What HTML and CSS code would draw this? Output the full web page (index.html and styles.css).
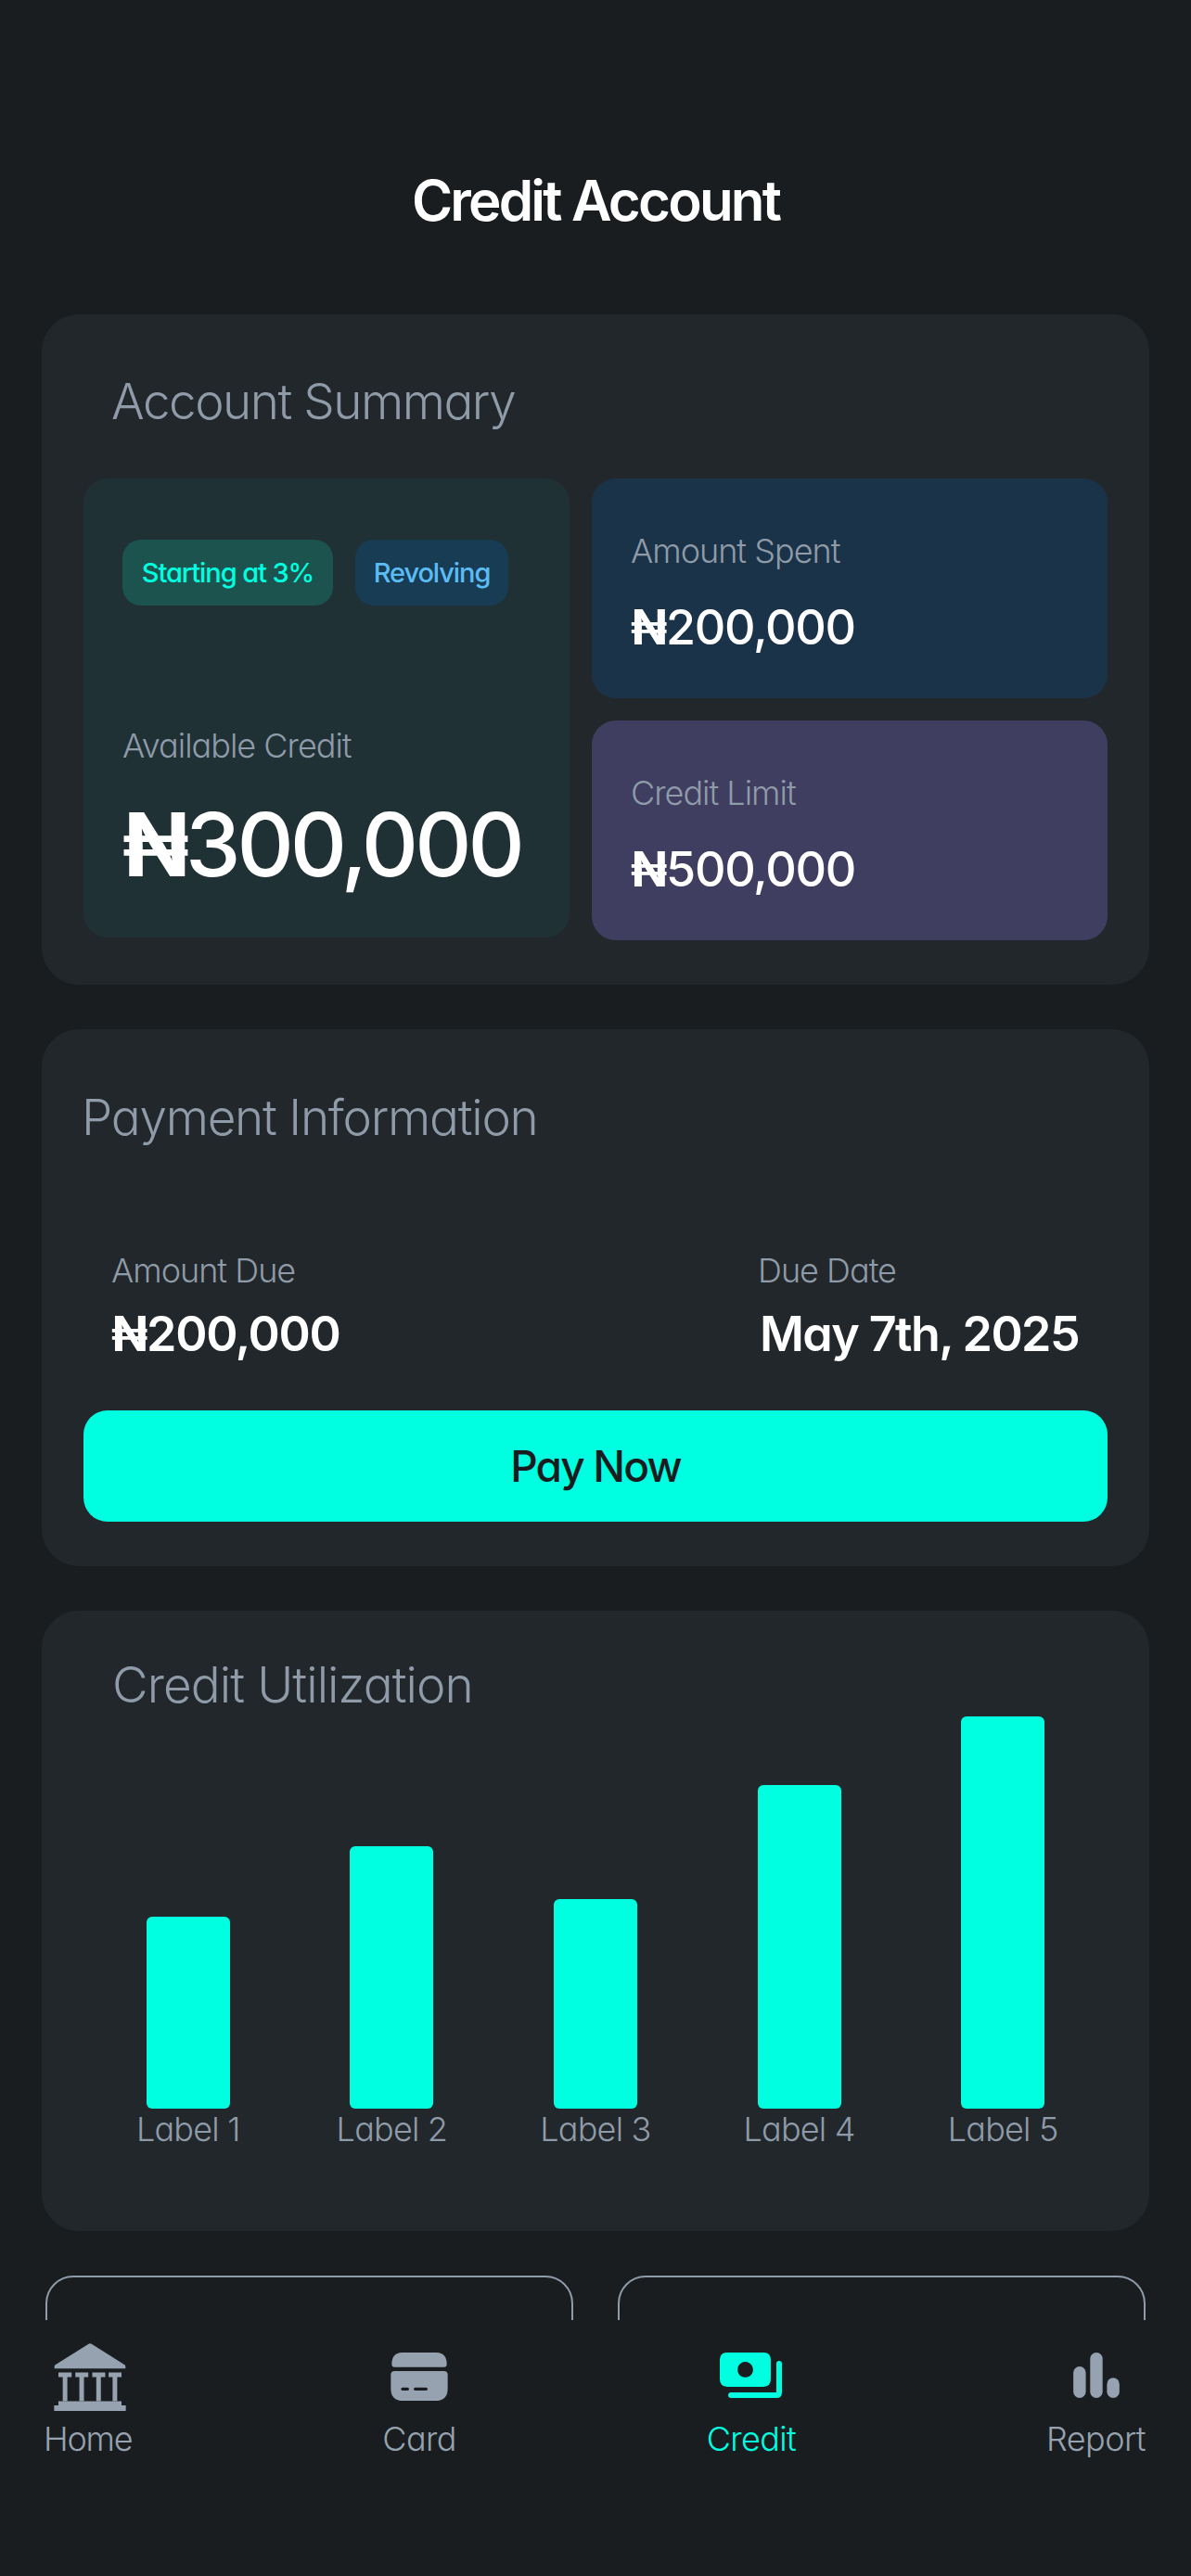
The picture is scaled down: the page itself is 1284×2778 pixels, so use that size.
FILE: index.html
```html
<!DOCTYPE html>
<html lang="en">
<head>
<meta charset="utf-8">
<title>Credit Account</title>
<link rel="stylesheet" href="styles.css">
</head>
<body>
<div class="screen">
  <header class="header"><h1 class="page-title">Credit Account</h1></header>
  <main class="content">
    <section class="card summary">
      <h2 class="card-title summary-title">Account Summary</h2>
      <div class="summary-grid">
        <div class="available">
          <div class="tags">
            <span class="tag tag-green">Starting at 3%</span>
            <span class="tag tag-blue">Revolving</span>
          </div>
          <div class="label available-label">Available Credit</div>
          <div class="hero-value"><span class="naira">₦</span>300,000</div>
        </div>
        <div class="stats">
          <div class="stat stat-blue">
            <div class="label">Amount Spent</div>
            <div class="value stat-value"><span class="naira">₦</span>200,000</div>
          </div>
          <div class="stat stat-purple">
            <div class="label">Credit Limit</div>
            <div class="value stat-value"><span class="naira">₦</span>500,000</div>
          </div>
        </div>
      </div>
    </section>

    <section class="card payment">
      <h2 class="card-title payment-title">Payment Information</h2>
      <div class="pay-row">
        <div class="pay-col">
          <div class="label">Amount Due</div>
          <div class="value pay-value"><span class="naira">₦</span>200,000</div>
        </div>
        <div class="pay-col pay-col-date">
          <div class="label">Due Date</div>
          <div class="value pay-value date-value">May 7th, 2025</div>
        </div>
      </div>
      <button class="pay-button" type="button">Pay Now</button>
    </section>

    <section class="card utilization">
      <h2 class="card-title util-title">Credit Utilization</h2>
      <div class="chart">
        <div class="chart-col"><div class="bar" style="height:207px"></div><div class="chart-label">Label 1</div></div>
        <div class="chart-col"><div class="bar" style="height:283px"></div><div class="chart-label">Label 2</div></div>
        <div class="chart-col"><div class="bar" style="height:226px"></div><div class="chart-label">Label 3</div></div>
        <div class="chart-col"><div class="bar" style="height:349px"></div><div class="chart-label">Label 4</div></div>
        <div class="chart-col"><div class="bar" style="height:423px"></div><div class="chart-label">Label 5</div></div>
      </div>
    </section>

    <div class="outline-row">
      <div class="outline-card"></div>
      <div class="outline-card"></div>
    </div>
  </main>

  <nav class="nav">
    <a class="nav-item">
      <span class="nav-icon">
        <svg class="glyph-home" viewBox="115 80 233 220" fill="currentColor">
          <path d="M226 83 Q232 79 238 83 L344 150 Q347 152 347 156 L347 162 L116 162 L116 156 Q116 152 119 150 Z"/>
          <path d="M129 175H172V190H158V268H143V190H129Z"/>
          <path d="M184 175H226V190H212V268H197V190H184Z"/>
          <path d="M239 175H281V190H267V268H252V190H239Z"/>
          <path d="M292 175H334V190H320V268H305V190H292Z"/>
          <path d="M129 268H334V282H348V300H115V282H129Z"/>
        </svg>
      </span>
      <span class="nav-label nav-label-home">Home</span>
    </a>
    <a class="nav-item">
      <span class="nav-icon">
        <svg class="glyph-card" viewBox="124 112 184 156" fill="currentColor">
          <path d="M162 112H270Q305 112 305 150Q305 159 296 159H136Q127 159 127 150Q127 112 162 112Z"/>
          <path fill-rule="evenodd" d="M136 172H296Q308 172 308 184V228Q308 268 268 268H164Q124 268 124 228V184Q124 172 136 172ZM162 225a5 5 0 0 0 0 10h16a5 5 0 0 0 0-10ZM203 225a5 5 0 0 0 0 10h35a5 5 0 0 0 0-10Z"/>
        </svg>
      </span>
      <span class="nav-label">Card</span>
    </a>
    <a class="nav-item nav-item-active">
      <span class="nav-icon">
        <svg class="glyph-credit" viewBox="1192 112 200 146" fill="currentColor">
          <path fill-rule="evenodd" d="M1216 112H1332Q1356 112 1356 136V198Q1356 222 1332 222H1216Q1192 222 1192 198V136Q1192 112 1216 112ZM1274 142a25 25 0 1 0 0.01 0Z"/>
          <path d="M1383 148V240Q1383 249 1374 249H1228" fill="none" stroke="currentColor" stroke-width="18" stroke-linecap="round"/>
        </svg>
      </span>
      <span class="nav-label">Credit</span>
    </a>
    <a class="nav-item">
      <span class="nav-icon">
        <svg class="glyph-report" viewBox="175 112 148 146" fill="currentColor">
          <rect x="175" y="157" width="40" height="101" rx="20"/>
          <rect x="229" y="112" width="40" height="146" rx="20"/>
          <rect x="283" y="193" width="40" height="65" rx="20"/>
        </svg>
      </span>
      <span class="nav-label">Report</span>
    </a>
  </nav>
</div>
</body>
</html>
```
FILE: styles.css
```css
* { box-sizing: border-box; }
html, body { margin: 0; padding: 0; background: #191d20; }
body {
  font-family: Inter, "Noto Sans", sans-serif;
  font-feature-settings: "cv11" 1;
  color: #fff;
}
.screen {
  position: relative;
  width: 1284px;
  height: 2778px;
  overflow: hidden;
  background: #191d20;
}
.header { height: 339px; padding-top: 180px; }
.page-title {
  margin: 0;
  font-size: 60px;
  line-height: 72px;
  font-weight: 600;
  text-align: center;
  letter-spacing: -2.8px;
}
.content { padding: 0 45px; display: flex; flex-direction: column; gap: 48px; }
.card { background: #22272b; border-radius: 40px; padding: 64px 45px 48px; }
.card-title {
  margin: 0;
  font-size: 53px;
  line-height: 60px;
  font-weight: 300;
  color: #8f9ba8;
  letter-spacing: -1.5px;
}
.summary-title { padding-left: 30px; letter-spacing: -1.5px; }
.payment-title { margin-left: -2px; letter-spacing: -1.25px; }
.summary-grid { display: grid; grid-template-columns: 524px 556px; gap: 24px; margin-top: 53px; }
.available { height: 495px; background: #203136; border-radius: 26px; padding: 66px 42px 0; }
.tags { display: flex; gap: 24px; }
.tag {
  height: 71px;
  border-radius: 20px;
  display: flex;
  align-items: center;
  font-size: 29px;
  font-weight: 500;
  letter-spacing: -1.1px;
}
.tag-green { width: 227px; justify-content: center; background: #1c534e; color: #00ffe0; }
.tag-blue { width: 165px; justify-content: center; background: #193c55; color: #5bbcf5; }
.label {
  font-size: 36px;
  line-height: 44px;
  font-weight: 300;
  color: #8f9ba8;
  letter-spacing: -1px;
}
.available-label { margin-top: 129px; }
.hero-value {
  margin-top: 30px;
  font-size: 95px;
  line-height: 110px;
  font-weight: 500;
  letter-spacing: -4px;
}
.naira { font-weight: 700; }
.stats { display: flex; flex-direction: column; gap: 24px; }
.stat { height: 237px; border-radius: 26px; padding: 56px 42px 0; }
.stat-blue { background: #1b3348; }
.stat-purple { background: #3f3e60; }
.value { line-height: 60px; letter-spacing: -1.3px; }
.stat-value { margin-top: 31px; font-size: 52px; font-weight: 500; }
.payment { padding-top: 65px; }
.pay-row { display: flex; justify-content: space-between; padding: 113px 30px 0; }
.pay-col-date { width: 347px; }
.pay-value { margin-top: 17px; font-size: 52px; font-weight: 600; white-space: nowrap; }
.date-value { margin-left: 2px; letter-spacing: -1.6px; }
.pay-button {
  display: block;
  width: 100%;
  height: 120px;
  margin-top: 52px;
  border: 0;
  border-radius: 26px;
  background: #00ffe0;
  color: #181c1f;
  font-family: inherit;
  font-feature-settings: inherit;
  font-size: 46px;
  font-weight: 500;
  letter-spacing: -1.8px;
}
.utilization { padding: 50px 48px 88px; }
.util-title { padding-left: 28px; letter-spacing: -0.9px; }
.chart { display: grid; grid-template-columns: repeat(5, 1fr); height: 471px; }
.chart-col { display: flex; flex-direction: column; align-items: center; justify-content: flex-end; }
.bar { width: 90px; background: #00ffe0; border-radius: 6px; }
.chart-label {
  font-size: 36px;
  line-height: 44px;
  font-weight: 300;
  color: #8f9ba8;
  letter-spacing: -0.8px;
}
.outline-row { display: flex; justify-content: space-between; padding: 0 4px; }
.outline-card {
  width: 569px;
  height: 200px;
  border: 2px solid #8f9ba8;
  border-radius: 30px;
}
.nav {
  position: absolute;
  left: 0;
  right: 0;
  bottom: 0;
  height: 276px;
  padding: 25px 49px 0 47px;
  background: #191d20;
  display: flex;
  justify-content: space-between;
  align-items: flex-start;
}
.nav-item { display: flex; flex-direction: column; align-items: center; color: #96a2af; }
.nav-item-active { color: #00ffe0; }
.nav-icon { height: 73px; display: block; }
.nav-icon svg { display: block; }
.glyph-home { width: 78px; height: 73px; margin-left: 4px; }
.glyph-card { width: 62px; height: 52px; margin-top: 10px; }
.glyph-credit { width: 67px; height: 49px; margin-top: 10px; }
.glyph-report { width: 50px; height: 49px; margin-top: 10px; }
.nav-label {
  margin-top: 8px;
  font-size: 36px;
  line-height: 44px;
  font-weight: 300;
  letter-spacing: -0.6px;
}
.nav-label-home { letter-spacing: -1.2px; }
```
